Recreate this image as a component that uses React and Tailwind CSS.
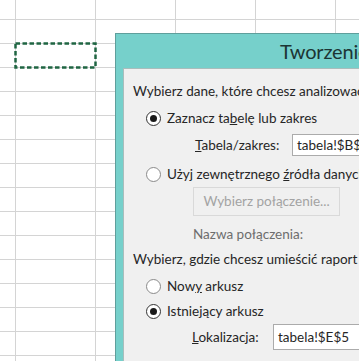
import React from 'react';

const font = { fontFamily: 'Lato, "Noto Sans", sans-serif' };

function Radio({ checked }) {
  return (
    <span
      className={`flex h-[15px] w-[15px] shrink-0 items-center justify-center rounded-full border bg-white ${
        checked ? 'border-[#333333]' : 'border-[#8a8a8a]'
      }`}
    >
      {checked && <span className="h-[7px] w-[7px] rounded-full bg-[#1a1a1a]" />}
    </span>
  );
}

function RadioRow({ checked, children, className = '' }) {
  return (
    <div className={`ml-[13px] flex h-[22px] items-center gap-[6px] ${className}`}>
      <Radio checked={checked} />
      <span>{children}</span>
    </div>
  );
}

export default function App() {
  const rows = Array.from({ length: 16 });
  const cols = Array.from({ length: 6 });

  return (
    <div className="relative h-[361px] w-[359px] overflow-hidden bg-white" style={font}>
      {/* Sheet grid */}
      <div className="-ml-[64px] -mt-[4px] flex flex-col">
        {rows.map((_, r) => (
          <div key={r} className="flex h-[24px] shrink-0">
            {cols.map((_, c) => (
              <div key={c} className="h-[24px] w-[80px] shrink-0 border-b border-r border-[#d4d4d4]" />
            ))}
          </div>
        ))}
      </div>

      {/* Copy marquee */}
      <svg className="absolute left-[14px] top-[42px]" width="83" height="27" viewBox="0 0 83 27">
        <rect x="1.5" y="1.5" width="80" height="24" fill="none" stroke="#1f6543" strokeWidth="2.5" strokeDasharray="4.5 2.5" />
      </svg>

      {/* Dialog */}
      <div className="absolute left-[115px] top-[33px] flex h-[340px] w-[260px] flex-col overflow-hidden border-l border-t border-[#5f9f9c] bg-[#76d0cb]">
        <div className="flex h-[34px] shrink-0 items-center pl-[164px]">
          <span className="whitespace-nowrap text-[20px] leading-none tracking-[-0.2px] text-[#1c3534]">Tworzenie tabeli przestawnej</span>
        </div>
        <div className="ml-[7px] flex flex-1 flex-col whitespace-nowrap border-l border-t border-[#a9bdbc] bg-[#f0f0f0] pl-[9px] pt-[11px] text-[13.5px] text-[#262626]">
          <div className="flex h-[22px] items-center">Wybierz dane, które chcesz analizować</div>

          <RadioRow checked className="mt-[5px]">
            Zaznacz ta<span className="underline">b</span>elę lub zakres
          </RadioRow>

          <div className="mt-[5px] flex h-[22px] items-center pl-[62px]">
            <span className="w-[97px] shrink-0">
              <span className="underline">T</span>abela/zakres:
            </span>
            <div className="flex h-[22px] w-[120px] shrink-0 items-center border border-[#ababab] bg-white pl-[4px]">
              tabela!$B$2:$C$20
            </div>
          </div>

          <RadioRow className="mt-[7px]">
            Użyj zewnętrznego <span className="underline">ź</span>ródła danych
          </RadioRow>

          <div className="ml-[60px] mt-[2px] flex h-[29px] w-[147px] items-center justify-center border border-[#d9d9d9] bg-[#f0f0f0] text-[#a3a3a3]">
            Wybierz połączenie...
          </div>

          <div className="ml-[60px] mt-[7px] flex h-[22px] items-center text-[#6d6d6d]">Nazwa połączenia:</div>

          <div className="mt-[3px] flex h-[22px] items-center">Wybierz, gdzie chcesz umieścić raport tabeli przestawnej</div>

          <RadioRow className="mt-[5px]">
            Now<span className="underline">y</span> arkusz
          </RadioRow>

          <RadioRow checked className="mt-[3px]">
            Istnie<span className="underline">j</span>ący arkusz
          </RadioRow>

          <div className="mt-[2px] flex h-[26px] items-center pl-[59px]">
            <span className="w-[81px] shrink-0">
              <span className="underline">L</span>okalizacja:
            </span>
            <div className="flex h-[26px] w-[140px] shrink-0 items-center border border-[#ababab] bg-white pl-[4px]">
              tabela!$E$5
            </div>
          </div>
        </div>
      </div>
    </div>
  );
}
